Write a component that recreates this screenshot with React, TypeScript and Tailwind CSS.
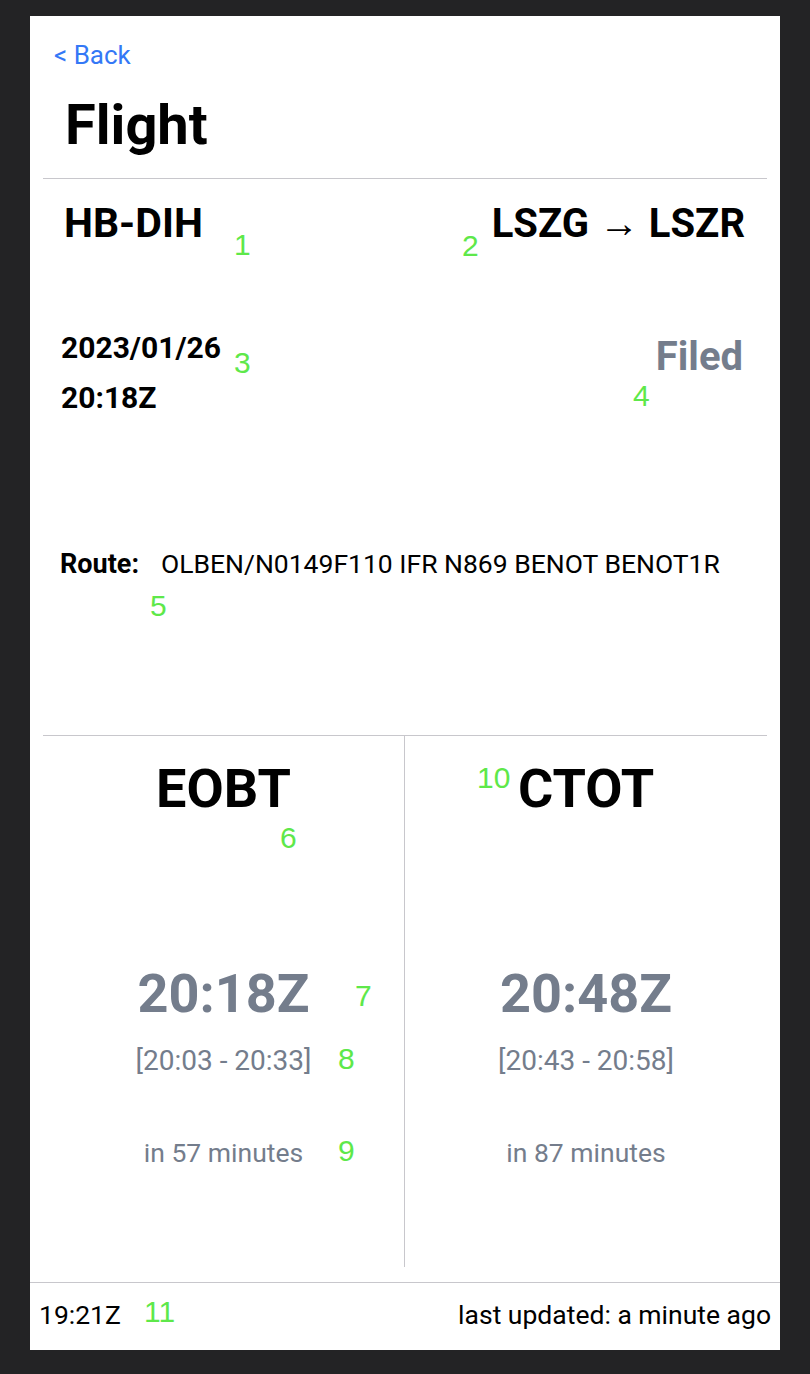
const marks = [
  { n: '1', cls: 'left-[204px] top-[214px]' },
  { n: '2', cls: 'left-[432px] top-[215px]' },
  { n: '3', cls: 'left-[204px] top-[332px]' },
  { n: '4', cls: 'left-[603px] top-[365px]' },
  { n: '5', cls: 'left-[120px] top-[575px]' },
  { n: '6', cls: 'left-[250px] top-[807px]' },
  { n: '7', cls: 'left-[325px] top-[965px]' },
  { n: '8', cls: 'left-[308px] top-[1028px]' },
  { n: '9', cls: 'left-[308px] top-[1120px]' },
  { n: '10', cls: 'left-[447px] top-[747px]' },
  { n: '11', cls: 'left-[114px] top-[1281px]' },
];

const times = [
  { label: 'EOBT', time: '20:18Z', window: '[20:03 - 20:33]', eta: 'in 57 minutes' },
  { label: 'CTOT', time: '20:48Z', window: '[20:43 - 20:58]', eta: 'in 87 minutes' },
];

const App = () => {
  return (
    <div className="min-h-screen bg-[#232325] pt-4 pb-6 font-['Roboto',sans-serif]">
      <div className="relative mx-auto flex h-[1334px] w-[750px] flex-col bg-white text-black">
        <div className="pt-[26px] pl-[24px]">
          <a className="text-[26px] leading-none text-[#3478f6]">&lt; Back</a>
        </div>
        <h1 className="mt-[26px] ml-[35px] text-[56px] font-bold leading-none">Flight</h1>

        <section className="mx-[13px] mt-[25px] h-[558px] border-y border-[#c8c7cc] pt-[24px]">
          <div className="flex items-start justify-between pl-[21px] pr-[22px]">
            <div className="text-[41px] font-bold leading-none">HB-DIH</div>
            <div className="mt-[1px] text-[40px] font-bold leading-none">LSZG → LSZR</div>
          </div>
          <div className="mt-[89px] flex items-start justify-between pl-[18px] pr-[24px]">
            <div className="text-[30px] font-bold leading-none">
              <div>2023/01/26</div>
              <div className="mt-[20px]">20:18Z</div>
            </div>
            <div className="mt-[4px] text-[40px] font-bold leading-none text-[#747d8c]">Filed</div>
          </div>
          <div className="mt-[138px] flex items-baseline gap-[22px] pl-[17px] leading-none">
            <span className="text-[27px] font-bold">Route:</span>
            <span className="text-[26.5px]">OLBEN/N0149F110 IFR N869 BENOT BENOT1R</span>
          </div>
        </section>

        <div className="mx-[13px] grid h-[531px] grid-cols-2">
          {times.map((t, i) => (
            <div
              key={t.label}
              className={i === 0 ? 'flex flex-col items-center border-r border-[#c8c7cc] pt-[26px]' : 'flex flex-col items-center pt-[26px]'}
            >
              <div className="text-[54px] font-bold leading-none">{t.label}</div>
              <div className="mt-[151px] text-[54px] font-bold leading-none text-[#747d8c]">{t.time}</div>
              <div className="mt-[26px] text-[28px] leading-none text-[#747d8c]">{t.window}</div>
              <div className="mt-[65px] text-[26.5px] leading-none text-[#747d8c]">{t.eta}</div>
            </div>
          ))}
        </div>

        <footer className="mt-[15px] flex flex-1 justify-between border-t border-[#c8c7cc] px-[9px] pt-[19px] text-[26.5px] leading-none">
          <span>19:21Z</span>
          <span>last updated: a minute ago</span>
        </footer>

        {marks.map((m) => (
          <span
            key={m.n}
            className={`absolute font-['Liberation_Sans',sans-serif] text-[30px] leading-none text-[#5ee84a] ${m.cls}`}
          >
            {m.n}
          </span>
        ))}
      </div>
    </div>
  );
};

export default App;
